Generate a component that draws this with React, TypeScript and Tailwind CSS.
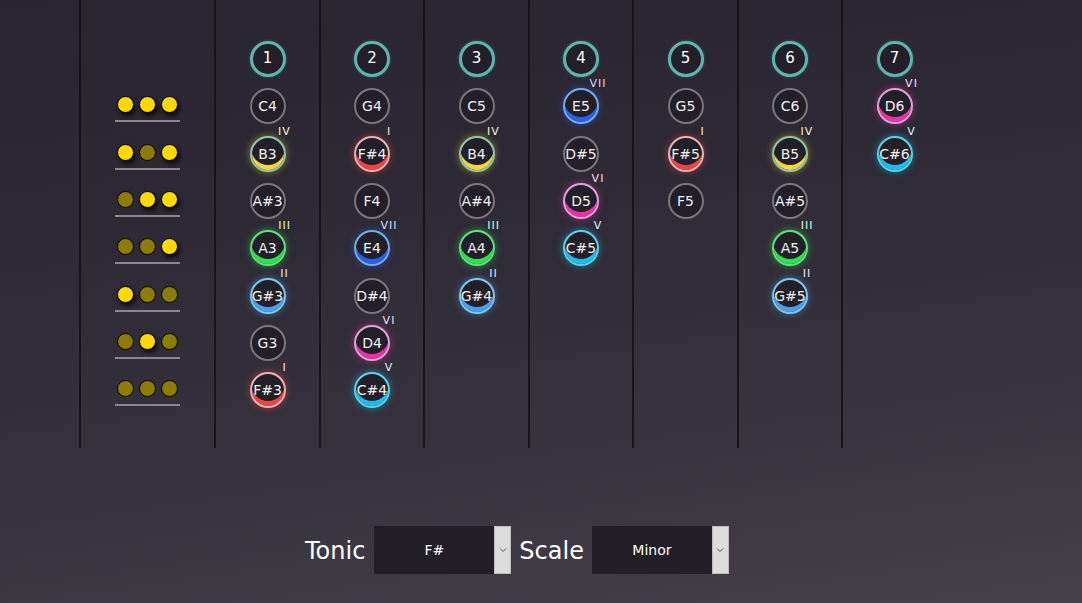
import React from "react";

type Note = [string, string?];

const columns: { n: number; notes: Note[] }[] = [
  { n: 1, notes: [["C4"], ["B3", "IV"], ["A#3"], ["A3", "III"], ["G#3", "II"], ["G3"], ["F#3", "I"]] },
  { n: 2, notes: [["G4"], ["F#4", "I"], ["F4"], ["E4", "VII"], ["D#4"], ["D4", "VI"], ["C#4", "V"]] },
  { n: 3, notes: [["C5"], ["B4", "IV"], ["A#4"], ["A4", "III"], ["G#4", "II"]] },
  { n: 4, notes: [["E5", "VII"], ["D#5"], ["D5", "VI"], ["C#5", "V"]] },
  { n: 5, notes: [["G5"], ["F#5", "I"], ["F5"]] },
  { n: 6, notes: [["C6"], ["B5", "IV"], ["A#5"], ["A5", "III"], ["G#5", "II"]] },
  { n: 7, notes: [["D6", "VI"], ["C#6", "V"]] },
];

const valves: boolean[][] = [
  [true, true, true],
  [true, false, true],
  [false, true, true],
  [false, false, true],
  [true, false, false],
  [false, true, false],
  [false, false, false],
];

const degreeStyle: Record<string, { ring: string; label: string }> = {
  I: {
    ring: "border-[#e2b2b4] shadow-[inset_0_-6px_0_-1px_#f04444,0_0_7px_rgba(240,68,68,0.55)]",
    label: "text-[#ffe0e0]",
  },
  II: {
    ring: "border-[#7cc6e6] shadow-[inset_0_-6px_0_-1px_#4a9ef0,0_0_7px_rgba(74,158,240,0.55)]",
    label: "text-[#e0eeff]",
  },
  III: {
    ring: "border-[#5ee07e] shadow-[inset_0_-6px_0_-1px_#2fe04e,0_0_7px_rgba(47,224,78,0.55)]",
    label: "text-[#d8ffd8]",
  },
  IV: {
    ring: "border-[#8ec6aa] shadow-[inset_0_-6px_0_-1px_#f6d63a,0_0_7px_rgba(246,214,58,0.5)]",
    label: "text-[#fbf3cc]",
  },
  V: {
    ring: "border-[#5cd0e2] shadow-[inset_0_-6px_0_-1px_#18bef0,0_0_7px_rgba(24,190,240,0.55)]",
    label: "text-[#d4f6ff]",
  },
  VI: {
    ring: "border-[#d6a6d6] shadow-[inset_0_-6px_0_-1px_#f02ea8,0_0_7px_rgba(240,46,168,0.55)]",
    label: "text-[#ffdcf4]",
  },
  VII: {
    ring: "border-[#6eb0e2] shadow-[inset_0_-6px_0_-1px_#2a5ef0,0_0_7px_rgba(42,94,240,0.55)]",
    label: "text-[#dcdcff]",
  },
};

const font = "font-['DejaVu_Sans','Liberation_Sans',sans-serif]";

function NoteCircle({ name, deg }: { name: string; deg?: string }) {
  const st = deg ? degreeStyle[deg] : null;
  return (
    <div className="relative w-[36px] h-[36px]">
      <div
        className={`w-full h-full rounded-full border-2 bg-[#231f29] flex items-center justify-center ${
          st ? st.ring : "border-[#7d747c]"
        }`}
      >
        <span className="text-[14px] leading-none text-[#f0f0f0]">{name}</span>
      </div>
      {deg && (
        <span className="absolute top-[-9px] left-[35px] w-0 flex justify-center">
          <span className={`text-[11px] leading-[10px] tracking-[1px] whitespace-nowrap ${st!.label}`}>{deg}</span>
        </span>
      )}
    </div>
  );
}

function HeaderCircle({ n }: { n: number }) {
  return (
    <div className="w-[36px] h-[36px] rounded-full border-[3px] border-[#5db6ae] bg-[#221f28] flex items-center justify-center shadow-[0_0_3px_rgba(93,182,174,0.4)]">
      <span className="text-[15px] leading-none text-white">{n}</span>
    </div>
  );
}

function Dot({ on }: { on: boolean }) {
  return (
    <div
      className={`w-[17px] h-[17px] rounded-full border-[1.5px] border-black ${
        on ? "bg-[#ffd900] shadow-[2px_3px_4px_rgba(0,0,0,0.75)]" : "bg-[#8c7c04]"
      }`}
    />
  );
}

function Select({ value }: { value: string }) {
  return (
    <div className="flex h-[48px]">
      <div className="w-[120px] h-full bg-[#211e28] flex items-center justify-center">
        <span className="text-[14px] text-white">{value}</span>
      </div>
      <div className="w-[17px] h-full bg-[#dcdcdc] border border-[#bdbdbd] flex items-center justify-center">
        <svg width="8" height="6" viewBox="0 0 8 6">
          <path d="M1 1.5 L4 4.5 L7 1.5" fill="none" stroke="#555" strokeWidth="1" />
        </svg>
      </div>
    </div>
  );
}

export default function App() {
  return (
    <div
      className={`w-full h-[603px] overflow-hidden ${font} bg-[linear-gradient(172deg,#282531_0%,#2d2a35_35%,#38343f_70%,#45404a_100%)]`}
    >
      <div className="flex h-[448px]">
        <div className="w-[79px]" />
        <div className="w-[135px] border-l-2 border-[#16141b] pt-[81.33px] flex flex-col items-center">
          {valves.map((row, i) => (
            <div key={i} className="h-[47.33px] flex flex-col items-center pt-[15.17px]">
              <div className="flex gap-[5px]">
                {row.map((on, j) => (
                  <Dot key={j} on={on} />
                ))}
              </div>
              <div className="mt-[7px] w-[65px] h-[2px] bg-[#8a8690]" />
            </div>
          ))}
        </div>
        {columns.map((c, i) => (
          <div
            key={c.n}
            className={`${i % 2 === 0 ? "w-[105px]" : "w-[104px]"} border-l-2 border-[#16141b] pt-[35.33px] flex flex-col items-center`}
          >
            <div className="h-[47.33px] flex items-center justify-center">
              <HeaderCircle n={c.n} />
            </div>
            {c.notes.map(([name, deg]) => (
              <div key={name} className="h-[47.33px] flex items-center justify-center">
                <NoteCircle name={name} deg={deg} />
              </div>
            ))}
          </div>
        ))}
      </div>
      <div className="flex items-center mt-[78px] pl-[305px]">
        <span className="text-[24px] leading-none text-white mr-[9px] translate-y-[1px]">Tonic</span>
        <Select value="F#" />
        <span className="text-[24px] leading-none text-white ml-[8px] mr-[8px] translate-y-[1px]">Scale</span>
        <Select value="Minor" />
      </div>
    </div>
  );
}
